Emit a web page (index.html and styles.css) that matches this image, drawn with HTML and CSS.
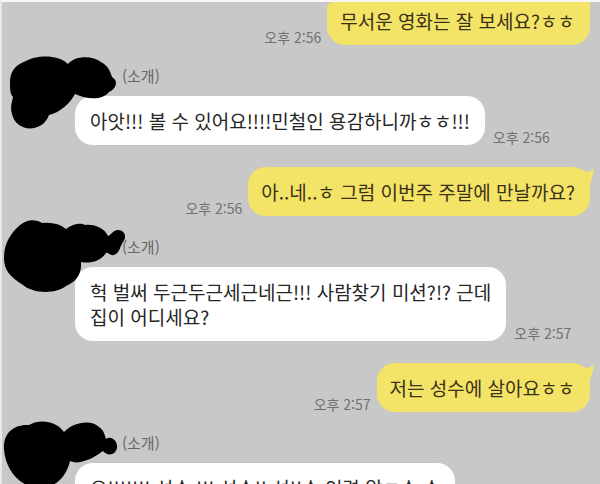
FILE: index.html
```html
<!DOCTYPE html>
<html lang="ko">
<head>
    <meta charset="UTF-8">
    <meta name="viewport" content="width=device-width, initial-scale=1.0">
    <title>채팅</title>
    <link rel="stylesheet" href="styles.css">
</head>
<body>

<main class="chat">
    <div class="row mine first">
        <time class="time">오후 2:56</time>
        <p class="bubble">무서운 영화는 잘 보세요?ㅎㅎ</p>
    </div>

    <div class="message">
        <svg class="scribble" viewBox="0 0 140 90" aria-hidden="true">
            <path d="M10 36C10 23 18 18 26 15C36 9 58 8 68 18C76 9 93 10 101 16C107 19 110 24 112 31C119 35 116 43 109 46C103 54 88 54 75 48C71 56 60 67 49 69C43 87 16 87 12 68C10 61 12 56 13 51C10 48 10 43 10 36Z"/>
        </svg>
        <div class="content">
            <span class="name">(소개)</span>
            <div class="row">
                <p class="bubble">아앗!!! 볼 수 있어요!!!!민철인 용감하니까ㅎㅎ!!!</p>
                <time class="time">오후 2:56</time>
            </div>
        </div>
    </div>

    <div class="row mine">
        <time class="time">오후 2:56</time>
        <p class="bubble tail">아..네..ㅎ 그럼 이번주 주말에 만날까요?</p>
    </div>

    <div class="message">
        <svg class="scribble" viewBox="0 0 140 90" aria-hidden="true">
            <path d="M4 41C4 26 11 16 20 8C27 2 36 2 42 6C52 5 60 7 66 12C74 6 81 6 85 8C95 7 104 11 108 19C111 18 113 13 118 13C125 13 127 20 123 25C120 29 120 36 114 38C110 39 108 35 106 36C101 44 90 47 81 45C82 58 75 65 66 69C54 78 32 76 23 68C10 60 4 53 4 41Z"/>
        </svg>
        <div class="content">
            <span class="name">(소개)</span>
            <div class="row">
                <p class="bubble">헉 벌써 두근두근세근네근!!! 사람찾기 미션?!? 근데<br>집이 어디세요?</p>
                <time class="time">오후 2:57</time>
            </div>
        </div>
    </div>

    <div class="row mine">
        <time class="time">오후 2:57</time>
        <p class="bubble tail">저는 성수에 살아요ㅎㅎ</p>
    </div>

    <div class="message">
        <svg class="scribble" viewBox="0 5 140 90" aria-hidden="true">
            <path d="M4 41C3 26 13 16 29 17C41 10 57 14 64 24C73 14 91 11 99 19C104 22 105 28 106 31C112 27 118 34 117 40C115 48 107 48 103 43C96 48 91 51 87 52C80 55 74 55 70 53C67 66 59 78 42 80C19 81 5 60 4 41Z"/>
        </svg>
        <div class="content">
            <span class="name">(소개)</span>
            <div class="row">
                <p class="bubble">오!!!!!!! 성수 !!! 성수!! 성!!수 인력 알ㄹ수 수</p>
            </div>
        </div>
    </div>
</main>

</body>
</html>
```
FILE: styles.css
```css
* {
    box-sizing: border-box;
}

body {
    margin: 0;
    height: 100vh;
    overflow: hidden;
    font-family: "Noto Sans CJK KR", sans-serif;
    background-color: #c8c8c8;
}

.chat {
    min-height: 100vh;
    padding-right: 10px;
    border-top: 2px solid #f7f7f7;
    border-left: 2px solid #e8e8e8;
}

.row {
    display: flex;
    align-items: flex-end;
    gap: 8px;
}

.mine {
    justify-content: flex-end;
    gap: 6px;
    margin-top: 22px;
}

.first {
    margin-top: 0;
}

.bubble {
    position: relative;
    margin: 0;
    padding: 12px 15px;
    border-radius: 18px;
    background-color: #fff;
    color: #262626;
    font-size: 19px;
    line-height: 25px;
}

.mine .bubble {
    padding: 12px 15px 12px 13px;
    background-color: #f3e366;
    color: #3a3218;
}

/* scrolled partly out of view */
.first .bubble {
    padding-top: 6px;
    border-radius: 6px 0 18px 18px;
}

/* little point on the top right corner */
.tail::after {
    content: "";
    position: absolute;
    top: 2px;
    right: -4px;
    width: 14px;
    height: 16px;
    background-color: #f3e366;
    clip-path: polygon(0 0, 50% 20%, 100% 0, 90% 40%, 70% 100%, 0 100%);
}

.time {
    flex: none;
    color: #707070;
    font-size: 14px;
    line-height: 16px;
}

.message {
    position: relative;
    margin-top: 19px;
    padding-left: 73px;
}

.name {
    display: block;
    padding-left: 47px;
    margin-bottom: 8px;
    color: #666;
    font-size: 15px;
    line-height: 24px;
}

/* black marker over the profile picture and name */
.scribble {
    position: absolute;
    top: -18px;
    left: -2px;
    z-index: 1;
    width: 140px;
    height: 90px;
    fill: #000;
}
```
